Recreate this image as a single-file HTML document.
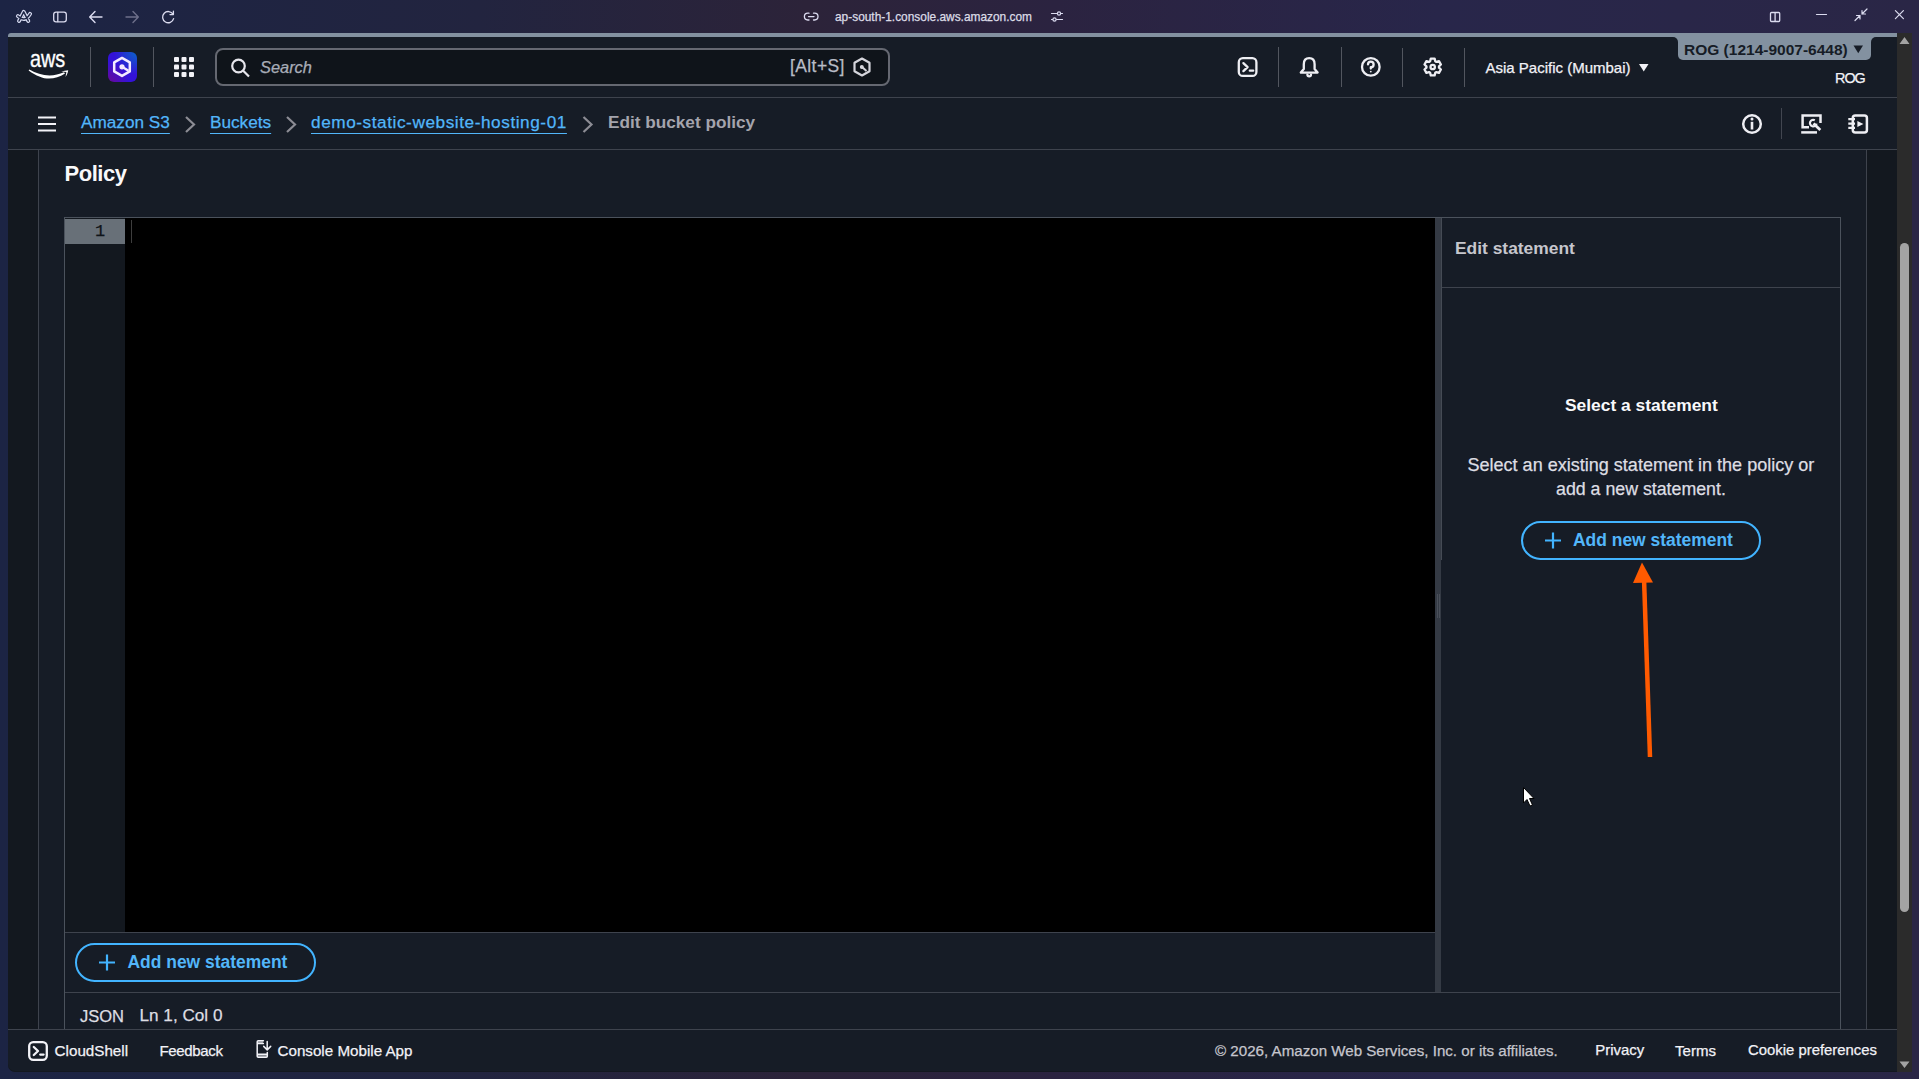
<!DOCTYPE html>
<html><head><meta charset="utf-8">
<style>
*{box-sizing:border-box;margin:0;padding:0}
html,body{width:1919px;height:1079px;overflow:hidden}
body{position:relative;font-family:"Liberation Sans",sans-serif;
background:linear-gradient(90deg,#1c2444 0%,#22243f 25%,#2c2339 42%,#2b2340 55%,#28264a 75%,#2a2646 100%);}
.a{position:absolute}
.t{position:absolute;white-space:nowrap;line-height:1;-webkit-text-stroke:0.25px currentColor}
svg{position:absolute;overflow:visible}
.hl{position:absolute;height:1px;background:#3e434d}
.vl{position:absolute;width:1px;background:#3e434d}
.lnk{color:#52b6fa;text-decoration:underline;text-decoration-thickness:1px;text-underline-offset:5px}
.btn{position:absolute;border:2px solid #42b4ff;border-radius:20px}
</style></head><body>

<!-- ============ browser chrome ============ -->
<svg style="left:0;top:0" width="1919" height="33" fill="none" stroke="#dcdcf0" stroke-width="1.4" stroke-linecap="round" stroke-linejoin="round">
  <!-- arc logo -->
  <path d="M19 21 L23.7 11.9 L28.3 21 M17.9 16.1 C20.5 18.6 23.5 19.4 25.5 18.6 C27.5 17.8 29 16 30.1 13.9" stroke="#d6daf0" stroke-width="3.9"/>
  <path d="M19 21 L23.7 11.9 L28.3 21 M17.9 16.1 C20.5 18.6 23.5 19.4 25.5 18.6 C27.5 17.8 29 16 30.1 13.9" stroke="#1d2544" stroke-width="1.5"/>
  <!-- sidebar -->
  <rect x="53.7" y="12.1" width="12.6" height="9.8" rx="2.3" stroke-width="1.3"/>
  <line x1="57.8" y1="12.5" x2="57.8" y2="21.5" stroke-width="1.3"/>
  <!-- back -->
  <path d="M102 17 H90 M95 11.5 L89.7 17 L95 22.5"/>
  <!-- forward -->
  <path d="M126 17 H138 M133 11.5 L138.3 17 L133 22.5" stroke="#6d6f8a"/>
  <!-- reload -->
  <path d="M173 14.2 A5.6 5.6 0 1 0 173.6 18.6 M173.4 11.2 V14.6 H170" stroke-width="1.3"/>
  <!-- link -->
  <path d="M809 13.2 H807.8 A3.4 3.4 0 0 0 807.8 20 H809 M813.5 13.2 H814.6 A3.4 3.4 0 0 1 814.6 20 H813.5 M808.5 16.6 H814" stroke-width="1.3"/>
  <!-- tune -->
  <path d="M1051.5 13.5 H1062.5 M1051.5 19.5 H1062.5" stroke-width="1.2"/>
  <circle cx="1059" cy="13.5" r="1.6" fill="#2a2646" stroke-width="1.2"/>
  <circle cx="1054.5" cy="19.5" r="1.6" fill="#2a2646" stroke-width="1.2"/>
  <!-- split -->
  <rect x="1770.5" y="12.5" width="9.2" height="9" rx="1" stroke-width="1.3"/>
  <line x1="1775.1" y1="13" x2="1775.1" y2="21" stroke-width="1.3"/>
  <!-- minimize -->
  <line x1="1816.5" y1="14.5" x2="1826.5" y2="14.5" stroke-width="1.2"/>
  <!-- restore -->
  <path d="M1855 20.5 L1860 15.5 M1856.5 15.5 H1860 V19 M1867 9 L1862 14 M1862 10.5 V14 H1865.5" stroke-width="1.2"/>
  <!-- close -->
  <path d="M1895.4 10.6 L1903.4 18.6 M1903.4 10.6 L1895.4 18.6" stroke-width="1.2"/>
</svg>
<div class="t" style="left:835px;top:11.8px;font-size:11.9px;color:#dcdce6">ap-south-1.console.aws.amazon.com</div>

<!-- ============ page ============ -->
<div class="a" style="left:8px;top:33px;width:1889px;height:1039px;background:#13181f;border-radius:7px 0 0 7px"></div>
<!-- account strip -->
<div class="a" style="left:8px;top:33px;width:1889px;height:4px;background:#8391a0;border-radius:3px 0 0 0"></div>

<!-- top nav -->
<div class="a" style="left:8px;top:37px;width:1889px;height:60px;background:#161c26"></div>
<!-- account tab -->
<div class="a" style="left:1672px;top:36px;width:205px;height:8px;background:#8391a0"></div>
<div class="a" style="left:1660px;top:37px;width:18px;height:10px;background:#161c26;border-radius:0 5px 0 0"></div>
<div class="a" style="left:1871px;top:37px;width:26px;height:10px;background:#161c26;border-radius:5px 0 0 0"></div>
<div class="a" style="left:1678px;top:36px;width:193px;height:24px;background:#8391a0;border-radius:0 0 5px 5px"></div>
<div class="t" style="left:1684px;top:41.7px;font-size:15.5px;font-weight:700;-webkit-text-stroke:0;color:#161c26">ROG (1214-9007-6448)</div>
<svg style="left:0;top:0" width="1" height="1"><path d="M1853.5 45.5 H1863 L1858.25 53.3 Z" fill="#161c26"/></svg>
<div class="hl" style="left:8px;top:97px;width:1889px"></div>

<!-- aws logo -->
<div class="t" style="left:30.2px;top:48px;font-size:23.2px;color:#fff;-webkit-text-stroke:0.35px #fff;transform:scaleX(0.855);transform-origin:0 0">aws</div>
<svg style="left:0;top:0" width="1" height="1" fill="#fff"><path d="M28.6 70.4 C36 75.8 43 78.6 49 78.6 C54.5 78.6 60 77 65 73.6 L64 72.3 C59.5 74.4 54.5 75.4 49.5 75.4 C42.5 75.4 35.5 73.4 29.4 69.6 Z"/><path d="M61.2 71.5 C63.5 70.9 66 70.4 68.2 70.2 C68 72.5 66.8 75 65.5 77 C65.8 75.2 66.2 73.3 66.4 72 C64.8 71.7 62.8 71.6 61.2 71.5 Z"/></svg>
<div class="vl" style="left:90px;top:47px;height:40px;background:#52565f"></div>
<!-- Q -->
<div class="a" style="left:108px;top:52px;width:29px;height:30px;border-radius:6px;background:radial-gradient(circle at 100% 0%,#0a64c8 0%,rgba(10,100,200,0) 55%),radial-gradient(circle at 0% 100%,#6a0898 0%,rgba(106,8,152,0) 50%),#3412d8"></div>
<svg style="left:0;top:0" width="1" height="1"><path d="M122 57.9 L129.8 62.4 V71.4 L122 75.9 L114.2 71.4 V62.4 Z" stroke="#f4eaff" stroke-width="2.5" fill="none" stroke-linejoin="round"/><circle cx="122" cy="66.8" r="2.6" fill="#f4eaff"/><path d="M122 66.8 L128.5 70.8" stroke="#f4eaff" stroke-width="2.5"/></svg>
<div class="vl" style="left:153px;top:47px;height:40px;background:#52565f"></div>
<!-- grid -->
<svg style="left:0;top:0" width="1" height="1" fill="#f2f2f7">
<rect x="174" y="57" width="5" height="5" rx="1"/><rect x="181.5" y="57" width="5" height="5" rx="1"/><rect x="189" y="57" width="5" height="5" rx="1"/>
<rect x="174" y="64.5" width="5" height="5" rx="1"/><rect x="181.5" y="64.5" width="5" height="5" rx="1"/><rect x="189" y="64.5" width="5" height="5" rx="1"/>
<rect x="174" y="72" width="5" height="5" rx="1"/><rect x="181.5" y="72" width="5" height="5" rx="1"/><rect x="189" y="72" width="5" height="5" rx="1"/>
</svg>
<!-- search -->
<div class="a" style="left:215px;top:48px;width:675px;height:38px;border:2px solid #656871;border-radius:8px;background:#0f141a"></div>
<svg style="left:0;top:0" width="1" height="1"><circle cx="238.5" cy="66" r="6.3" stroke="#e6e6ec" stroke-width="2.2" fill="none"/><path d="M243 70.5 L249 76.5" stroke="#e6e6ec" stroke-width="2.2"/></svg>
<div class="t" style="left:260px;top:59px;font-size:16.4px;font-style:italic;color:#a8adb8">Search</div>
<div class="t" style="left:790px;top:57.8px;font-size:17.5px;color:#b8bcc6;letter-spacing:0.4px">[Alt+S]</div>
<svg style="left:0;top:0" width="1" height="1"><path d="M862 58.5 L869.5 62.75 V71.25 L862 75.5 L854.5 71.25 V62.75 Z" stroke="#d5d5dc" stroke-width="2.2" fill="none" stroke-linejoin="round"/><circle cx="861.8" cy="67" r="2" fill="#d5d5dc"/><path d="M862 67 L866.5 71" stroke="#d5d5dc" stroke-width="2"/></svg>

<!-- right nav icons -->
<svg style="left:0;top:0" width="1" height="1" stroke="#eeeef3" stroke-width="2.3" fill="none" stroke-linecap="round" stroke-linejoin="round">
  <rect x="1238.8" y="58.2" width="17.6" height="17.7" rx="4" stroke-width="2.3"/>
  <path d="M1243.4 63.1 L1247.6 67.1 L1243.4 71.1 M1249.8 70.7 H1253.2" stroke-width="2.3"/>
  <path d="M1309.2 58.2 C1305.6 58.2 1303.8 60.6 1303.8 64.2 V69 L1300.8 72.6 H1317.6 L1314.6 69 V64.2 C1314.6 60.6 1312.8 58.2 1309.2 58.2 Z"/>
  <path d="M1307.4 74.6 A1.8 1.8 0 0 0 1311 74.6"/>
  <circle cx="1370.8" cy="66.9" r="8.8"/>
  <path d="M1368 64.4 A2.8 2.8 0 1 1 1370.8 67.2 V68.6"/>
  <circle cx="1370.8" cy="71.6" r="0.9" fill="#eeeef3" stroke="none"/>
  <path d="M1430.14 61.24 L1430.77 58.62 L1434.63 58.62 L1435.26 61.24 L1436.40 61.90 L1438.99 61.13 L1440.92 64.49 L1438.97 66.34 L1438.97 67.66 L1440.92 69.51 L1438.99 72.87 L1436.40 72.10 L1435.26 72.76 L1434.63 75.38 L1430.77 75.38 L1430.14 72.76 L1429.00 72.10 L1426.41 72.87 L1424.48 69.51 L1426.43 67.66 L1426.43 66.34 L1424.48 64.49 L1426.41 61.13 L1429.00 61.90 Z"/>
  <circle cx="1432.7" cy="67" r="2.2"/>
</svg>
<div class="vl" style="left:1278px;top:47px;height:40px;background:#52565f"></div>
<div class="vl" style="left:1341px;top:47px;height:40px;background:#52565f"></div>
<div class="vl" style="left:1402px;top:48px;height:39px;background:#52565f"></div>
<div class="vl" style="left:1464px;top:48px;height:39px;background:#52565f"></div>
<div class="t" style="left:1485.5px;top:59.9px;font-size:15px;color:#f2f2f7">Asia Pacific (Mumbai)</div>
<svg style="left:0;top:0" width="1" height="1"><path d="M1639 64 H1648.5 L1643.75 71.5 Z" fill="#f2f2f7"/></svg>
<div class="t" style="left:1835px;top:71px;font-size:14.4px;color:#f2f2f7;letter-spacing:-1.0px">ROG</div>

<!-- breadcrumb bar -->
<div class="a" style="left:8px;top:98px;width:1889px;height:51px;background:#161c26"></div>
<div class="hl" style="left:8px;top:149px;width:1889px"></div>
<svg style="left:0;top:0" width="1" height="1" stroke="#f2f2f7" stroke-width="2.2"><path d="M38 117.5 H56 M38 124 H56 M38 130.5 H56"/></svg>
<div class="t lnk" style="left:81px;top:114.3px;font-size:17.2px">Amazon S3</div>
<div class="t lnk" style="left:210px;top:114.3px;font-size:17.2px">Buckets</div>
<div class="t lnk" style="left:311px;top:114.3px;font-size:17.2px;letter-spacing:0.57px">demo-static-website-hosting-01</div>
<svg style="left:0;top:0" width="1" height="1" stroke="#8c8c94" stroke-width="2.2" fill="none"><path d="M186 117 L194 124.5 L186 132 M287 117 L295 124.5 L287 132 M583.5 117 L591.5 124.5 L583.5 132"/></svg>
<div class="t" style="left:608px;top:114.3px;font-size:17.2px;font-weight:700;-webkit-text-stroke:0;color:#a4a4ad">Edit bucket policy</div>
<!-- right breadcrumb icons -->
<svg style="left:0;top:0" width="1" height="1" stroke="#eeeef3" stroke-width="2.5" fill="none" stroke-linejoin="round">
  <circle cx="1752" cy="124" r="8.8"/>
  <path d="M1752 121.8 V129.5" stroke-width="2.6"/><circle cx="1752" cy="118.9" r="1.5" fill="#eeeef3" stroke="none"/>
  <path d="M1809 127.3 H1802.6 V115.4 H1820.5 V123" stroke-linejoin="miter"/>
  <path d="M1801.2 132.4 H1817"/>
  <path d="M1813.5 123.5 L1820.3 130" stroke-width="2.8"/>
  <path d="M1814.8 120.2 A3.3 3.3 0 1 0 1816.5 123.6" stroke-width="2.2"/>
  <rect x="1852.8" y="115.4" width="14.1" height="17.2" rx="2.5"/>
  <path d="M1848.3 119.1 H1855 M1848.3 123.6 H1855 M1848.3 127.9 H1855" stroke-width="2.2"/>
  <path d="M1857.4 121 L1863.4 124 L1857.4 127 Z" fill="#eeeef3" stroke="none"/>
</svg>
<div class="vl" style="left:1781px;top:108px;height:31px;background:#424650"></div>

<!-- ============ content ============ -->
<div class="a" style="left:39px;top:150px;width:1827px;height:880px;background:#161c26"></div>
<div class="vl" style="left:38px;top:150px;height:880px"></div>
<div class="vl" style="left:1866px;top:150px;height:880px"></div>

<div class="t" style="left:64.5px;top:163.2px;font-size:22px;letter-spacing:-0.45px;font-weight:700;-webkit-text-stroke:0;color:#f9f9fb">Policy</div>

<!-- editor frame -->
<div class="hl" style="left:64px;top:217px;width:1777px;background:#4b525c"></div>
<div class="vl" style="left:64px;top:217px;height:813px;background:#4b525c"></div>
<div class="vl" style="left:1840px;top:217px;height:813px;background:#4b525c"></div>
<!-- gutter -->
<div class="a" style="left:65px;top:218px;width:60px;height:714px;background:#13181f"></div>
<div class="a" style="left:65px;top:219px;width:60px;height:25px;background:#687078"></div>
<div class="t" style="left:95px;top:222.5px;font-size:17px;font-family:'Liberation Mono',monospace;color:#0f141a">1</div>
<!-- editor -->
<div class="a" style="left:125px;top:218px;width:1310px;height:714px;background:#000"></div>
<div class="a" style="left:131px;top:220px;width:1px;height:23px;background:#3e3e3e"></div>
<div class="hl" style="left:65px;top:932px;width:1370px"></div>
<!-- splitter -->
<div class="a" style="left:1435px;top:218px;width:6px;height:774px;background:#343a44"></div>
<div class="a" style="left:1441px;top:218px;width:1px;height:342px;background:#454b55"></div>
<div class="a" style="left:1436.5px;top:594px;width:1px;height:24px;background:#4a505a"></div>
<div class="a" style="left:1439px;top:594px;width:1px;height:24px;background:#4a505a"></div>
<!-- right panel -->
<div class="t" style="left:1455px;top:240.4px;font-size:17.4px;font-weight:700;-webkit-text-stroke:0;color:#c6c6cd">Edit statement</div>
<div class="hl" style="left:1442px;top:287px;width:398px"></div>
<div class="t" style="left:1565px;top:396.5px;font-size:17.4px;font-weight:700;-webkit-text-stroke:0;color:#f9f9fb">Select a statement</div>
<div class="t" style="left:1467.5px;top:455.8px;font-size:18.04px;color:#dedee3">Select an existing statement in the policy or</div>
<div class="t" style="left:1556px;top:480.5px;font-size:17.78px;color:#dedee3">add a new statement.</div>
<div class="btn" style="left:1521px;top:521px;width:240px;height:39px"></div>
<svg style="left:0;top:0" width="1" height="1" stroke="#42b4ff" stroke-width="2.2"><path d="M1545 540.5 H1561 M1553 532.5 V548.5"/></svg>
<div class="t" style="left:1573px;top:532.2px;font-size:17.45px;font-weight:700;-webkit-text-stroke:0;color:#52b6fa">Add new statement</div>

<div class="hl" style="left:65px;top:992px;width:1775px"></div>
<div class="btn" style="left:75px;top:943px;width:241px;height:39px"></div>
<svg style="left:0;top:0" width="1" height="1" stroke="#42b4ff" stroke-width="2.2"><path d="M99 962.5 H115 M107 954.5 V970.5"/></svg>
<div class="t" style="left:127.5px;top:954.3px;font-size:17.45px;font-weight:700;-webkit-text-stroke:0;color:#52b6fa">Add new statement</div>

<div class="t" style="left:80px;top:1008px;font-size:16.5px;color:#dedee3">JSON</div>
<div class="t" style="left:139.5px;top:1007.2px;font-size:17.16px;color:#dedee3">Ln 1, Col 0</div>

<!-- ============ footer ============ -->
<div class="a" style="left:8px;top:1029px;width:1889px;height:42px;background:#161c26;border-radius:0 0 0 7px"></div>
<div class="hl" style="left:8px;top:1029px;width:1889px"></div>
<svg style="left:0;top:0" width="1" height="1" stroke="#f2f2f7" stroke-width="2" fill="none" stroke-linecap="round" stroke-linejoin="round">
  <rect x="29.2" y="1042.1" width="17.6" height="17.7" rx="4" stroke-width="2.3"/>
  <path d="M33.8 1047 L38 1051 L33.8 1055 M40.2 1054.6 H43.6" stroke-width="2.3"/>
  <rect x="257.5" y="1041.3" width="5.6" height="2" fill="#8a8d94" stroke="none"/><rect x="257.5" y="1054.6" width="9.5" height="2.2" fill="#8a8d94" stroke="none"/>
  <path d="M263.4 1040.8 H258.2 Q257.2 1040.8 257.2 1041.8 V1056.2 Q257.2 1057.2 258.2 1057.2 H266.3 Q267.3 1057.2 267.3 1056.2 V1052.4 M257.2 1043.5 H263.4 M257.2 1054.3 H267.3 M267.2 1041.5 V1049.6 M263.7 1046.4 L267.2 1049.9 L270.7 1046.4" stroke-width="1.5"/>
</svg>
<div class="t" style="left:54.6px;top:1043.4px;font-size:15.2px;color:#f2f2f7">CloudShell</div>
<div class="t" style="left:159.4px;top:1043.4px;font-size:15px;color:#f2f2f7;letter-spacing:-0.33px">Feedback</div>
<div class="t" style="left:277.5px;top:1043.4px;font-size:15.18px;color:#f2f2f7">Console Mobile App</div>
<div class="t" style="left:1215px;top:1043.4px;font-size:15.14px;color:#c6c6cd">© 2026, Amazon Web Services, Inc. or its affiliates.</div>
<div class="t" style="left:1595.3px;top:1043.4px;font-size:14.95px;color:#f2f2f7">Privacy</div>
<div class="t" style="left:1675px;top:1043.4px;font-size:15.06px;color:#f2f2f7">Terms</div>
<div class="t" style="left:1748px;top:1043.4px;font-size:14.88px;color:#f2f2f7">Cookie preferences</div>

<!-- ============ scrollbar ============ -->
<div class="a" style="left:1897px;top:33px;width:15px;height:1039px;background:#2b2b2b"></div>
<div class="a" style="left:1900px;top:243px;width:9px;height:669px;background:#a3a3a3;border-radius:5px"></div>
<svg style="left:0;top:0" width="1" height="1" fill="#a3a3a3"><path d="M1904.5 37 L1909.5 44 H1899.5 Z M1904.5 1068 L1909.5 1061.5 H1899.5 Z"/></svg>

<!-- ============ annotation ============ -->
<svg style="left:0;top:0" width="1" height="1">
  <path d="M1650 757 L1644 578" stroke="#ff5a00" stroke-width="4.5" fill="none"/>
  <path d="M1642 562.5 L1653 582.5 L1633 583 Z" fill="#ff5a00"/>
</svg>
<!-- cursor -->
<svg style="left:0;top:0" width="1" height="1"><path d="M1523.5 787.5 V803 L1527 799.5 L1530 806 L1532.5 805 L1529.5 798.5 H1534 Z" fill="#fff" stroke="#000" stroke-width="1"/></svg>

</body></html>
